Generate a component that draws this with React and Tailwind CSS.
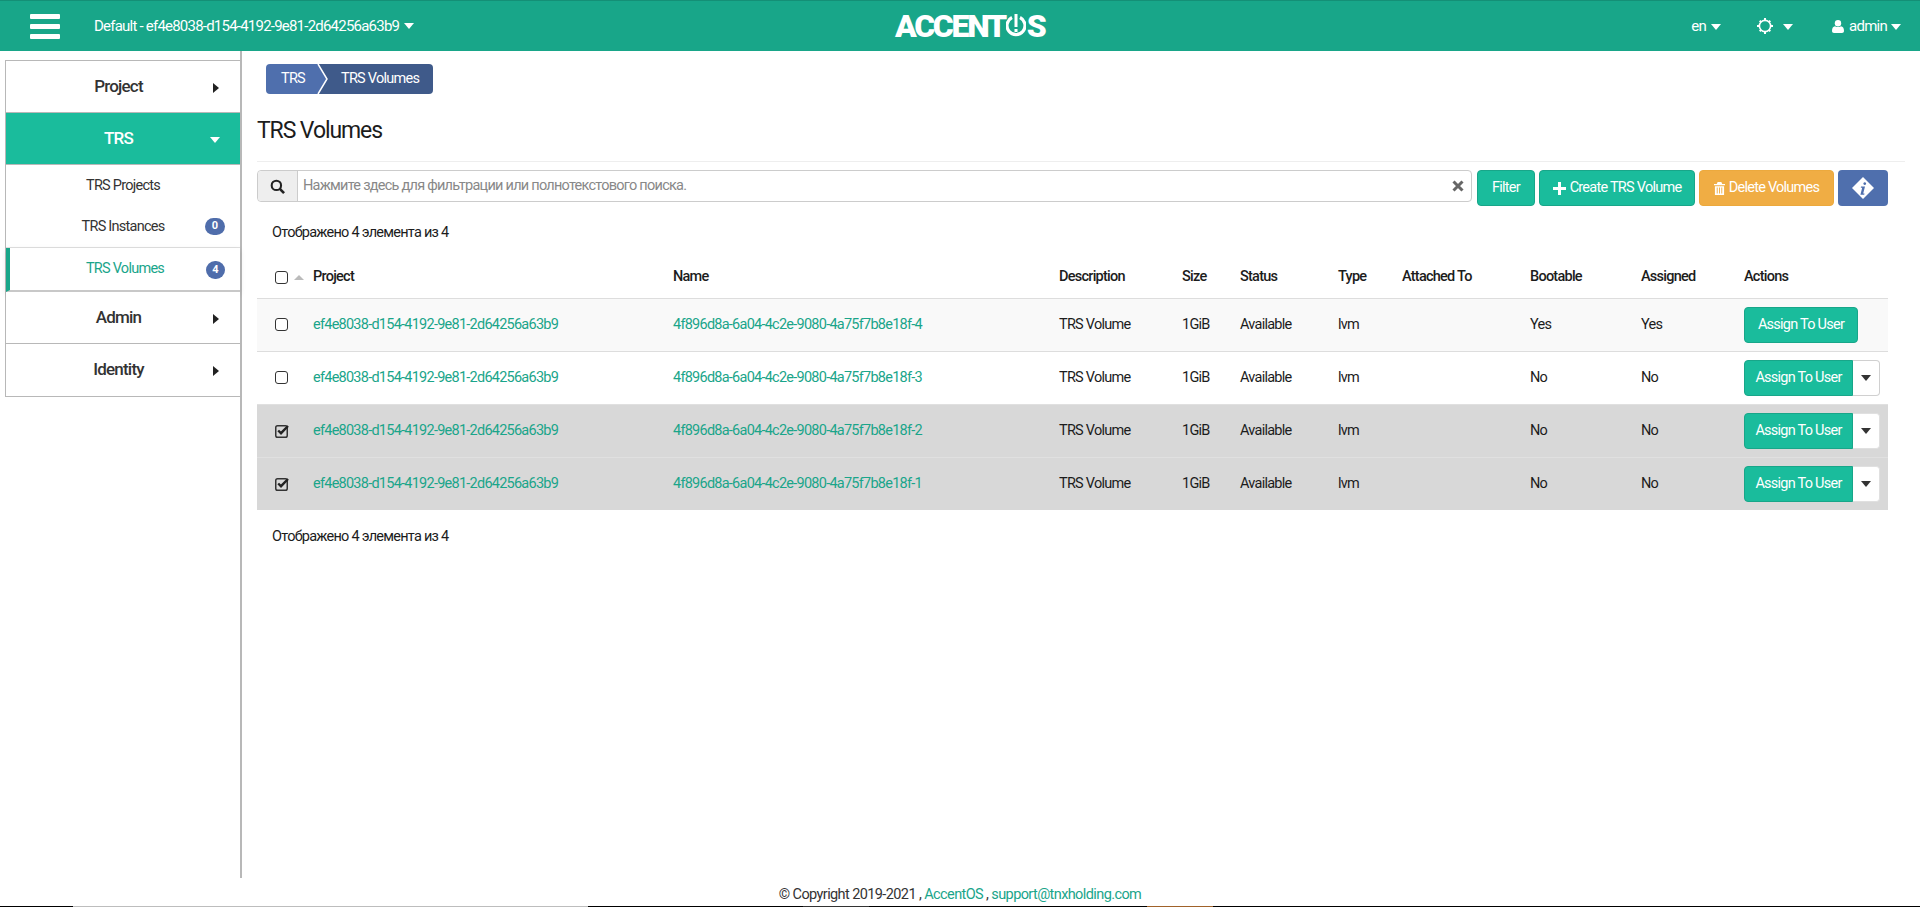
const Caret = ({ className = 'text-white' }) => (
  <svg viewBox="0 0 10 6" className={`inline-block h-[6px] w-[10px] shrink-0 fill-current ${className}`}>
    <path d="M0 0h10L5 6z" />
  </svg>
);

const CaretRight = () => (
  <svg viewBox="0 0 6 10" className="inline-block h-[10px] w-[6px] fill-[#222]">
    <path d="M0 0v10l6-5z" />
  </svg>
);

const Gear = () => (
  <svg viewBox="0 0 16 16" className="h-[16px] w-[16px]">
    <circle cx="8" cy="8" r="5.6" fill="none" stroke="white" strokeWidth="1.6" />
    <path fill="white" d="M7 0h2v2.500H7zM7 13.500h2V16H7zM0 7h2.500v2H0zM13.500 7H16v2h-2.500zM2 3.400 3.400 2 5 3.600 3.600 5zM11 12.400l1.400-1.400L14 12.600 12.600 14zM2 12.600 3.600 11 5 12.400 3.400 14zM11 3.600 12.600 2 14 3.400 12.400 5z" />
  </svg>
);

const User = () => (
  <svg viewBox="0 0 12 13" className="h-[13px] w-[12px] fill-white">
    <circle cx="6" cy="3.200" r="3.200" />
    <path d="M0 11c0-3 1.200-4.600 3-4.800 1.800 1.200 4.200 1.200 6 0 1.800.2 3 1.800 3 4.800 0 1.200-.8 2-2 2H2c-1.200 0-2-.8-2-2z" />
  </svg>
);

const Checkbox = ({ checked }) =>
  checked ? (
    <svg viewBox="0 0 15 14" className="block h-[14px] w-[15px]">
      <rect x="0.75" y="1.75" width="11.5" height="11.5" rx="1.8" fill="none" stroke="#333" strokeWidth="1.5" />
      <path d="M3.200 6.500 6 9.200 13 2" fill="none" stroke="#222" strokeWidth="2.400" />
    </svg>
  ) : (
    <span className="block h-[13px] w-[13px] rounded-[3px] border-[1.5px] border-[#333] bg-white" />
  );

const Row = ({ alt, checked, suffix, single, yes }) => {
  const bg = checked ? 'bg-[#d8d8d8]' : alt ? 'bg-[#f9f9f9]' : 'bg-white';
  const border = checked ? 'border-[#e0e0e0]' : 'border-[#ddd]';
  const td = `px-2 align-middle border-t ${border}`;
  return (
    <tr className={`h-[53px] ${bg}`}>
      <td className={`${td} pl-[18px]`}><Checkbox checked={checked} /></td>
      <td className={td}><a className="text-[#1aa58a]">ef4e8038-d154-4192-9e81-2d64256a63b9</a></td>
      <td className={td}><a className="text-[#1aa58a]">4f896d8a-6a04-4c2e-9080-4a75f7b8e18f-{suffix}</a></td>
      <td className={td}>TRS Volume</td>
      <td className={td}>1GiB</td>
      <td className={td}>Available</td>
      <td className={td}>lvm</td>
      <td className={td}></td>
      <td className={td}>{yes ? 'Yes' : 'No'}</td>
      <td className={td}>{yes ? 'Yes' : 'No'}</td>
      <td className={td}>
        {single ? (
          <button className="h-[36px] w-[114px] rounded-[4px] border border-[#18a689] bg-[#1abc9c] text-center text-white">Assign To User</button>
        ) : (
          <div className="flex">
            <button className="h-[36px] w-[109px] rounded-l-[4px] border border-[#18a689] bg-[#1abc9c] text-center text-white">Assign To User</button>
            <button className={`flex h-[36px] w-[27px] items-center justify-center rounded-r-[4px] border border-l-0 bg-white ${checked ? 'border-[#e0e0e0]' : 'border-[#d0d0d0]'}`}>
              <Caret className="text-[#333]" />
            </button>
          </div>
        )}
      </td>
    </tr>
  );
};

const SideItem = ({ label, open, last }) => (
  <div className={`relative flex h-[52px] items-center ${last ? '' : 'border-b border-[#b8b8b8]'} ${open ? 'bg-[#1abc9c] text-white' : 'bg-white text-[#333]'}`}>
    <span className="w-[225px] text-center text-[17px] font-medium tracking-[-0.8px]">{label}</span>
    {open ? (
      <span className="absolute left-[204px] top-[20px] leading-none"><Caret /></span>
    ) : (
      <span className="absolute left-[207px] top-[20px] leading-none"><CaretRight /></span>
    )}
  </div>
);

const BOTTOM_STRIP = [
  ['w-[73px]', 'bg-black'],
  ['w-[515px]', 'bg-[#bdbdbd]'],
  ['w-[215px]', 'bg-black'],
  ['w-[66px]', 'bg-[#333]'],
  ['w-[278px]', 'bg-black'],
  ['w-[66px]', 'bg-[#a0622a]'],
  ['flex-1', 'bg-black'],
];

export default function App() {
  return (
    <div className="flex h-[907px] w-[1920px] flex-col overflow-hidden bg-white text-[14.5px] tracking-[-0.75px] text-[#1c1c1c] [font-family:'Roboto',sans-serif]">
      <header className="flex h-[51px] shrink-0 items-center border-t border-[#148f76] bg-[#18a689] text-white">
        <div className="ml-[30px] flex w-[30px] flex-col gap-[5px]">
          <span className="h-[5px] rounded-[1px] bg-white" />
          <span className="h-[5px] rounded-[1px] bg-white" />
          <span className="h-[5px] rounded-[1px] bg-white" />
        </div>
        <div className="ml-[34px] flex w-[316px] items-center gap-[5px] whitespace-nowrap text-[15px] tracking-[-0.78px]">
          <span>Default - ef4e8038-d154-4192-9e81-2d64256a63b9</span>
          <Caret />
        </div>
        <div className="ml-[485px] flex w-[151px] items-center text-[32px] font-black leading-none tracking-[-2.300px]">
          <span>ACCENT</span>
          <svg viewBox="0 0 20 24" className="mx-[1px] h-[24px] w-[20px] shrink-0">
            <path d="M6 3.500a9 9 0 1 0 8 0" fill="none" stroke="white" strokeWidth="3.200" />
            <path d="M8.500 0h3v13h-3zM8.500 15h3v3h-3z" fill="white" />
          </svg>
          <span>S</span>
        </div>
        <div className="ml-auto flex items-center text-[15px]">
          <span>en</span>
          <span className="ml-[5px] leading-none"><Caret /></span>
          <span className="ml-[36px]"><Gear /></span>
          <span className="ml-[10px] leading-none"><Caret /></span>
          <span className="ml-[39px]"><User /></span>
          <span className="ml-[5px]">admin</span>
          <span className="ml-[4px] mr-[19px] leading-none"><Caret /></span>
        </div>
      </header>

      <div className="flex min-h-0 flex-1">
        <aside className="w-[242px] shrink-0 border-r-2 border-[#b8b8b8] pl-[5px] pr-[1px] pt-[9px]">
          <div className="w-[236px] border border-[#b8b8b8]">
            <SideItem label="Project" />
            <SideItem label="TRS" open />
            <div className="flex h-[42px] items-center justify-center text-[#333]">TRS Projects</div>
            <div className="relative flex h-[41px] items-center justify-center border-b border-[#e0e0e0] text-[#333]">
              TRS Instances
              <span className="absolute left-[199px] top-[11px] flex h-[17px] w-[20px] items-center justify-center rounded-full bg-[#4f6dab] text-[11px] font-bold tracking-normal text-white">0</span>
            </div>
            <div className="relative flex h-[44px] items-center justify-center border-b-2 border-l-4 border-[#c8c8c8] border-l-[#18a689] text-[#1aa58a] shadow-[0_2px_6px_rgba(0,0,0,0.1)]">
              TRS Volumes
              <span className="absolute left-[196px] top-[13px] flex h-[18px] w-[19px] items-center justify-center rounded-full bg-[#4f6dab] text-[11px] font-bold tracking-normal text-white">4</span>
            </div>
            <SideItem label="Admin" />
            <SideItem label="Identity" last />
          </div>
        </aside>

        <main className="min-w-0 flex-1 pl-[15px] pr-[32px]">
          <nav className="ml-[9px] mt-[13px] flex h-[30px] w-[167px] items-stretch">
            <span className="flex w-[50px] items-center rounded-l-[4px] bg-[#4f6fad] pl-[15px] text-white">TRS</span>
            <svg viewBox="0 0 12 30" className="h-[30px] w-[12px] shrink-0">
              <path d="M0 0h12v30H0z" fill="#3f5a8a" />
              <path d="M0 0h2l9 15-9 15H0z" fill="#4f6fad" />
              <path d="M2 0l9 15-9 15" fill="none" stroke="white" strokeWidth="1.500" />
            </svg>
            <span className="flex flex-1 items-center rounded-r-[4px] bg-[#3f5a8a] pl-[13px] text-white">TRS Volumes</span>
          </nav>
          <h1 className="mt-[21px] text-[23px] font-normal leading-[32px] tracking-[-1.1px]">TRS Volumes</h1>
          <div className="mr-[-17px] mt-[14px] border-t border-[#eee]" />
          <div className="mt-[8px] flex items-start">
            <div className="flex h-[32px] w-[1215px] items-center rounded-[4px] border border-[#ccc]">
              <span className="flex h-full w-[40px] items-center justify-center rounded-l-[4px] border-r border-[#ccc] bg-[#eee]">
                <svg viewBox="0 0 16 16" className="h-[15px] w-[15px]" fill="none" stroke="#222" strokeWidth="2.200">
                  <circle cx="6.800" cy="6.800" r="5" />
                  <path d="M10.500 10.500 15 15" strokeWidth="2.800" />
                </svg>
              </span>
              <span className="ml-[5px] text-[#888]">Нажмите здесь для фильтрации или полнотекстового поиска.</span>
              <svg viewBox="0 0 12 12" className="ml-auto mr-[7px] h-[12px] w-[12px]" stroke="#666" strokeWidth="3">
                <path d="M1.500 1.500l9 9M10.500 1.500l-9 9" />
              </svg>
            </div>
            <button className="ml-[5px] h-[36px] w-[58px] rounded-[4px] border border-[#18a689] bg-[#1abc9c] text-white">Filter</button>
            <button className="ml-[4px] flex h-[36px] w-[156px] items-center justify-center gap-[4px] rounded-[4px] border border-[#18a689] bg-[#1abc9c] text-white">
              <svg viewBox="0 0 13 13" className="h-[13px] w-[13px] fill-white"><path d="M5 0h3v5h5v3H8v5H5V8H0V5h5z" /></svg>
              Create TRS Volume
            </button>
            <button className="ml-[4px] flex h-[36px] w-[135px] items-center justify-center gap-[4px] rounded-[4px] border border-[#eca93d] bg-[#f0ad44] text-white">
              <svg viewBox="0 0 12 14" className="h-[13px] w-[11px] fill-white">
                <path d="M4 0h4l1 2h3v1.500H0V2h3zM1 4.500h10V14H1zM3 6v6.500h1V6zM5.500 6v6.500h1V6zM8 6v6.500h1V6z" fillRule="evenodd" />
              </svg>
              Delete Volumes
            </button>
            <button className="ml-[4px] flex h-[36px] w-[50px] items-center justify-center rounded-[4px] bg-[#4f6fad]">
              <svg viewBox="0 0 24 24" className="h-[24px] w-[24px]">
                <path d="M12 1 23 12 12 23 1 12z" fill="white" />
                <path d="M13.800 6.200a1.400 1.400 0 1 1-.1 0zM10 10.500h4l-1.800 7h1.300l-.3 1.200H9.400l1.800-7H9.800z" fill="#4f6fad" />
              </svg>
            </button>
          </div>
          <p className="ml-[15px] mt-[17px] h-[20px] leading-[20px]">Отображено 4 элемента из 4</p>

          <table className="mt-[12px] w-[1631px] table-fixed border-collapse">
            <colgroup>
              <col className="w-[48px]" />
              <col className="w-[360px]" />
              <col className="w-[386px]" />
              <col className="w-[123px]" />
              <col className="w-[58px]" />
              <col className="w-[98px]" />
              <col className="w-[64px]" />
              <col className="w-[128px]" />
              <col className="w-[111px]" />
              <col className="w-[103px]" />
              <col className="w-[152px]" />
            </colgroup>
            <thead>
              <tr className="h-[43px] text-left">
                <th className="pl-[18px] pt-[2px] align-middle font-medium">
                  <div className="flex items-center gap-[6px]">
                    <Checkbox />
                    <svg viewBox="0 0 10 5" className="h-[5px] w-[10px] fill-[#bbb]"><path d="M5 0l5 5H0z" /></svg>
                  </div>
                </th>
                {['Project', 'Name', 'Description', 'Size', 'Status', 'Type', 'Attached To', 'Bootable', 'Assigned', 'Actions'].map((h) => (
                  <th key={h} className="px-2 pt-[2px] font-medium">{h}</th>
                ))}
              </tr>
            </thead>
            <tbody>
              <Row alt suffix="4" single yes />
              <Row suffix="3" />
              <Row checked suffix="2" />
              <Row checked suffix="1" />
            </tbody>
          </table>
          <p className="ml-[15px] mt-[17px] leading-[20px]">Отображено 4 элемента из 4</p>
        </main>
      </div>

      <footer className="flex h-[28px] shrink-0 items-start justify-center pt-[6px] tracking-[-0.6px] text-[#333]">
        <span>© Copyright 2019-2021 , <a className="text-[#1aa58a]">AccentOS</a> , <a className="text-[#1aa58a]">support@tnxholding.com</a></span>
      </footer>
      <div className="flex h-[1px] shrink-0">
        {BOTTOM_STRIP.map(([w, c], i) => (
          <span key={i} className={`${w} ${c}`} />
        ))}
      </div>
    </div>
  );
}
